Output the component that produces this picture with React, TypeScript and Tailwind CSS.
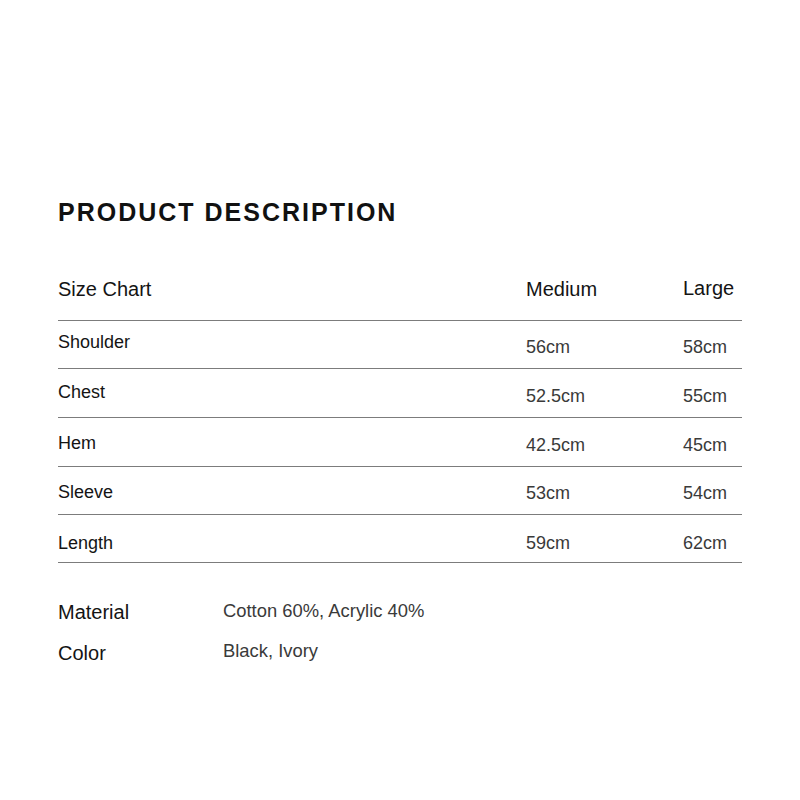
import React from "react";

const rows = [
  { label: "Shoulder", m: "56cm", l: "58cm", h: "h-[48px]", lp: "pt-[11px]", vp: "pt-[16px]" },
  { label: "Chest", m: "52.5cm", l: "55cm", h: "h-[49px]", lp: "pt-[13px]", vp: "pt-[17px]" },
  { label: "Hem", m: "42.5cm", l: "45cm", h: "h-[49px]", lp: "pt-[15px]", vp: "pt-[17px]" },
  { label: "Sleeve", m: "53cm", l: "54cm", h: "h-[48px]", lp: "pt-[15px]", vp: "pt-[16px]" },
  { label: "Length", m: "59cm", l: "62cm", h: "h-[48px]", lp: "pt-[18px]", vp: "pt-[18px]" },
];

export default function App() {
  return (
    <div
      className="w-[800px] h-[800px] bg-white pl-[58px] pt-[198px] text-[#111]"
      style={{ fontFamily: '"Liberation Sans", Arial, sans-serif' }}
    >
      <div className="w-[684px]">
        <h1 className="text-[25px] leading-[28px] font-bold tracking-[2px] text-[#111]">
          PRODUCT DESCRIPTION
        </h1>

        <div className="mt-[51px] pb-[19px] border-b border-[#7c7c7c] grid grid-cols-[468px_157px_1fr] text-[20px] leading-[24px] text-[#141414]">
          <div>Size Chart</div>
          <div>Medium</div>
          <div className="-mt-[1px]">Large</div>
        </div>

        {rows.map((r) => (
          <div
            key={r.label}
            className={`${r.h} border-b border-[#7c7c7c] grid grid-cols-[468px_157px_1fr] text-[18px] leading-[20px]`}
          >
            <div className={`${r.lp} text-[#141414]`}>{r.label}</div>
            <div className={`${r.vp} text-[#3a3a3a]`}>{r.m}</div>
            <div className={`${r.vp} text-[#3a3a3a]`}>{r.l}</div>
          </div>
        ))}

        <div className="mt-[36px] grid grid-cols-[165px_1fr] gap-y-[15px] items-center">
          <div className="text-[20px] leading-[26px] text-[#141414]">Material</div>
          <div className="text-[18.4px] leading-[24px] text-[#3a3a3a] -mt-[2px]">Cotton 60%, Acrylic 40%</div>
          <div className="text-[20px] leading-[26px] text-[#141414]">Color</div>
          <div className="text-[18.4px] leading-[24px] text-[#3a3a3a] -mt-[4px]">Black, Ivory</div>
        </div>
      </div>
    </div>
  );
}
